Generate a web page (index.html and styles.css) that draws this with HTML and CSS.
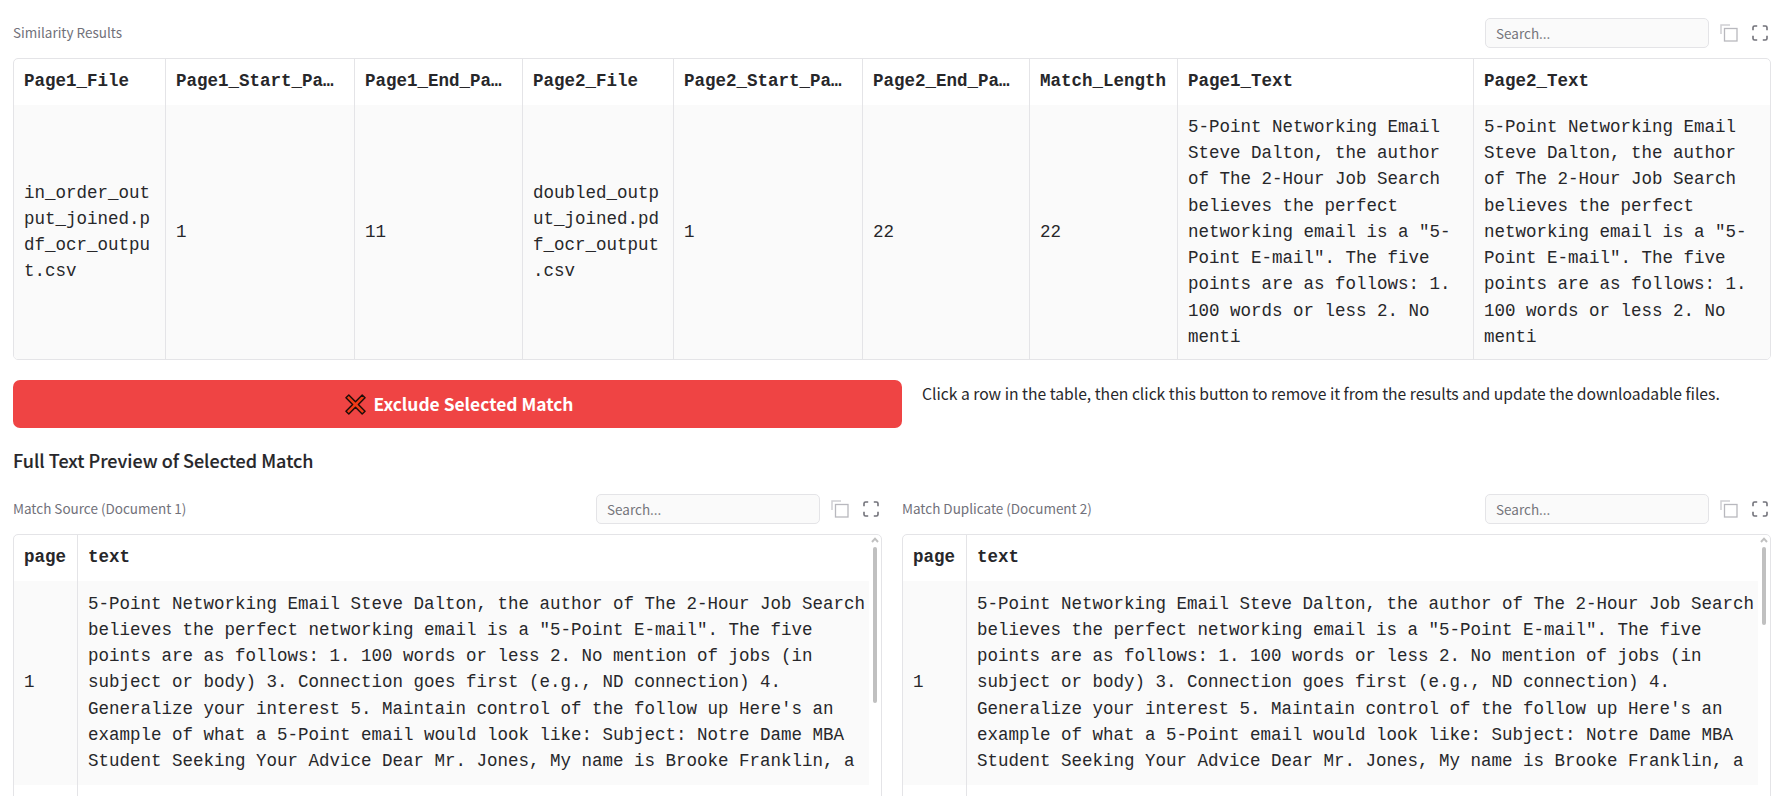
FILE: index.html
```html
<!DOCTYPE html>
<html lang="en">
<head>
<meta charset="utf-8">
<title>Similarity Results</title>
<link rel="stylesheet" href="styles.css">
</head>
<body>
<svg class="defs" width="0" height="0">
  <symbol id="copy" viewBox="0 0 18 18"><path d="M1 10V1h9" fill="none" stroke="#d0d0d4" stroke-width="1.5"/><rect x="4.5" y="4.5" width="12.5" height="12.5" fill="none" stroke="#b8b8be" stroke-width="1.3"/></symbol>
  <symbol id="expand" viewBox="0 0 16 16"><path d="M1 5.2V2.6Q1 1 2.6 1H5.2M10.8 1h2.6Q15 1 15 2.6v2.6M15 10.8v2.6q0 1.6-1.6 1.6h-2.6M5.2 15H2.6Q1 15 1 13.4v-2.6" fill="none" stroke="#72727a" stroke-width="1.6"/></symbol>
</svg>
<main class="page">
  <section>
    <div class="toolbar">
      <span class="label">Similarity Results</span>
      <input class="search" placeholder="Search...">
      <svg class="copy"><use href="#copy"/></svg>
      <svg class="expand"><use href="#expand"/></svg>
    </div>
    <div class="grid results">
      <div class="th">Page1_File</div><div class="th">Page1_Start_Pa…</div><div class="th">Page1_End_Pa…</div><div class="th">Page2_File</div><div class="th">Page2_Start_Pa…</div><div class="th">Page2_End_Pa…</div><div class="th">Match_Length</div><div class="th">Page1_Text</div><div class="th">Page2_Text</div>
      <div class="td">in_order_out<br>put_joined.p<br>df_ocr_outpu<br>t.csv</div><div class="td">1</div><div class="td">11</div><div class="td">doubled_outp<br>ut_joined.pd<br>f_ocr_output<br>.csv</div><div class="td">1</div><div class="td">22</div><div class="td">22</div>
      <div class="td">5-Point Networking Email<br>Steve Dalton, the author<br>of The 2-Hour Job Search<br>believes the perfect<br>networking email is a "5-<br>Point E-mail". The five<br>points are as follows: 1.<br>100 words or less 2. No<br>menti</div>
      <div class="td">5-Point Networking Email<br>Steve Dalton, the author<br>of The 2-Hour Job Search<br>believes the perfect<br>networking email is a "5-<br>Point E-mail". The five<br>points are as follows: 1.<br>100 words or less 2. No<br>menti</div>
    </div>
  </section>
  <div class="action">
    <button class="exclude"><svg class="cross" viewBox="0 0 22 22"><path d="M1 4 4 1l7 7 7-7 3 3-7 7 7 7-3 3-7-7-7 7-3-3 7-7z" fill="#f03a17" stroke="#1c0d0b" stroke-width="1.5" stroke-linejoin="round"/></svg><span>Exclude Selected Match</span></button>
    <p class="hint">Click a row in the table, then click this button to remove it from the results and update the downloadable files.</p>
  </div>
  <h3 class="heading">Full Text Preview of Selected Match</h3>
  <div class="previews">
    <section>
      <div class="toolbar">
        <span class="label">Match Source (Document 1)</span>
        <input class="search" placeholder="Search...">
        <svg class="copy"><use href="#copy"/></svg>
        <svg class="expand"><use href="#expand"/></svg>
      </div>
      <div class="frame">
        <div class="grid preview">
          <div class="th">page</div><div class="th">text</div>
          <div class="td">1</div>
          <div class="td">5-Point Networking Email Steve Dalton, the author of The 2-Hour Job Search<br>believes the perfect networking email is a "5-Point E-mail". The five<br>points are as follows: 1. 100 words or less 2. No mention of jobs (in<br>subject or body) 3. Connection goes first (e.g., ND connection) 4.<br>Generalize your interest 5. Maintain control of the follow up Here's an<br>example of what a 5-Point email would look like: Subject: Notre Dame MBA<br>Student Seeking Your Advice Dear Mr. Jones, My name is Brooke Franklin, a</div>
          <div class="next"></div><div class="next"></div>
        </div>
        <div class="scroll"><svg width="8" height="6" viewBox="0 0 8 6"><path d="M1 5 4 1.7 7 5" fill="none" stroke="#c0c0c0" stroke-width="2"/></svg><i class="thumb long"></i></div>
      </div>
    </section>
    <section>
      <div class="toolbar">
        <span class="label">Match Duplicate (Document 2)</span>
        <input class="search" placeholder="Search...">
        <svg class="copy"><use href="#copy"/></svg>
        <svg class="expand"><use href="#expand"/></svg>
      </div>
      <div class="frame">
        <div class="grid preview">
          <div class="th">page</div><div class="th">text</div>
          <div class="td">1</div>
          <div class="td">5-Point Networking Email Steve Dalton, the author of The 2-Hour Job Search<br>believes the perfect networking email is a "5-Point E-mail". The five<br>points are as follows: 1. 100 words or less 2. No mention of jobs (in<br>subject or body) 3. Connection goes first (e.g., ND connection) 4.<br>Generalize your interest 5. Maintain control of the follow up Here's an<br>example of what a 5-Point email would look like: Subject: Notre Dame MBA<br>Student Seeking Your Advice Dear Mr. Jones, My name is Brooke Franklin, a</div>
          <div class="next"></div><div class="next"></div>
        </div>
        <div class="scroll"><svg width="8" height="6" viewBox="0 0 8 6"><path d="M1 5 4 1.7 7 5" fill="none" stroke="#c0c0c0" stroke-width="2"/></svg><i class="thumb"></i></div>
      </div>
    </section>
  </div>
</main>
</body>
</html>
```

FILE: styles.css
```css
* { box-sizing: border-box; }
body { margin: 0; background: #fff; color: #27272a; font-family: "Noto Sans CJK SC", "Noto Sans", sans-serif; }
.defs { display: block; }
.page { height: 796px; overflow: hidden; padding: 18px 12px 0 13px; display: flex; flex-direction: column; }
.toolbar { display: flex; align-items: center; height: 30px; margin-bottom: 10px; padding-right: 2px; }
.label { margin-right: auto; padding-bottom: 1px; font-size: 13.5px; line-height: 29px; color: #71717a; white-space: nowrap; }
.search { width: 224px; height: 30px; margin: 0 11px 0 0; padding: 0 10px 1px; border: 1px solid #e4e4e7; border-radius: 5px; background: #fafafa; font: 13.5px "Noto Sans CJK SC", sans-serif; outline: 0; }
.search::placeholder { color: #75757a; opacity: 1; }
.copy { width: 18px; height: 18px; margin-right: 14px; }
.expand { width: 16px; height: 16px; margin-right: 1px; }
.grid { display: grid; font: 17.5px/26.25px "Liberation Mono", monospace; }
.results { grid-template: 46px 254px / 152px 189px 168px 151px 189px 167px 148px 296px 1fr; border: 1px solid #e4e4e7; border-radius: 5px; overflow: hidden; }
.th { font-weight: 700; padding: 9px 10px; border-right: 1px solid #e4e4e7; white-space: nowrap; overflow: hidden; }
.td { display: flex; align-items: center; padding: 0 0 0 10px; border-right: 1px solid #e4e4e7; background: #fafafa; white-space: nowrap; }
.results > :nth-child(9n), .preview > :nth-child(2n) { border-right: 0; }
.action { display: flex; gap: 20px; margin-top: 20px; height: 48px; }
.exclude { width: 889px; height: 48px; padding: 0 0 0 3px; border: 0; border-radius: 7px; background: #ef4444; color: #fff; display: flex; align-items: center; justify-content: center; gap: 8px; font: 700 17.4px/26px "Noto Sans CJK SC", sans-serif; }
.cross { width: 21px; height: 21px; }
.hint { margin: 0; font-size: 15.68px; line-height: 28px; white-space: nowrap; }
.heading { margin: 18px 0 0; font-size: 18px; line-height: 28px; font-weight: 500; height: 48px; -webkit-text-stroke: .12px #27272a; }
.previews { display: grid; grid-template-columns: 869px 869px; gap: 20px; }
.previews .toolbar { margin-top: 20px; }
.frame { display: flex; height: 300px; border: 1px solid #e4e4e7; border-radius: 5px; overflow: hidden; }
.preview { flex: 1; min-width: 0; grid-template: 46px 204px 50px / 64px minmax(0, 1fr); }
.preview .td { padding-bottom: 1px; }
.next { border-right: 1px solid #e4e4e7; }
.scroll { flex: none; width: 12px; padding: 2px 1px 0 0; display: flex; flex-direction: column; align-items: center; }
.scroll svg { margin-bottom: 4px; }
.thumb { width: 4px; height: 78px; border-radius: 2px; background: #c0c0c0; }
.thumb.long { height: 156px; }
```
